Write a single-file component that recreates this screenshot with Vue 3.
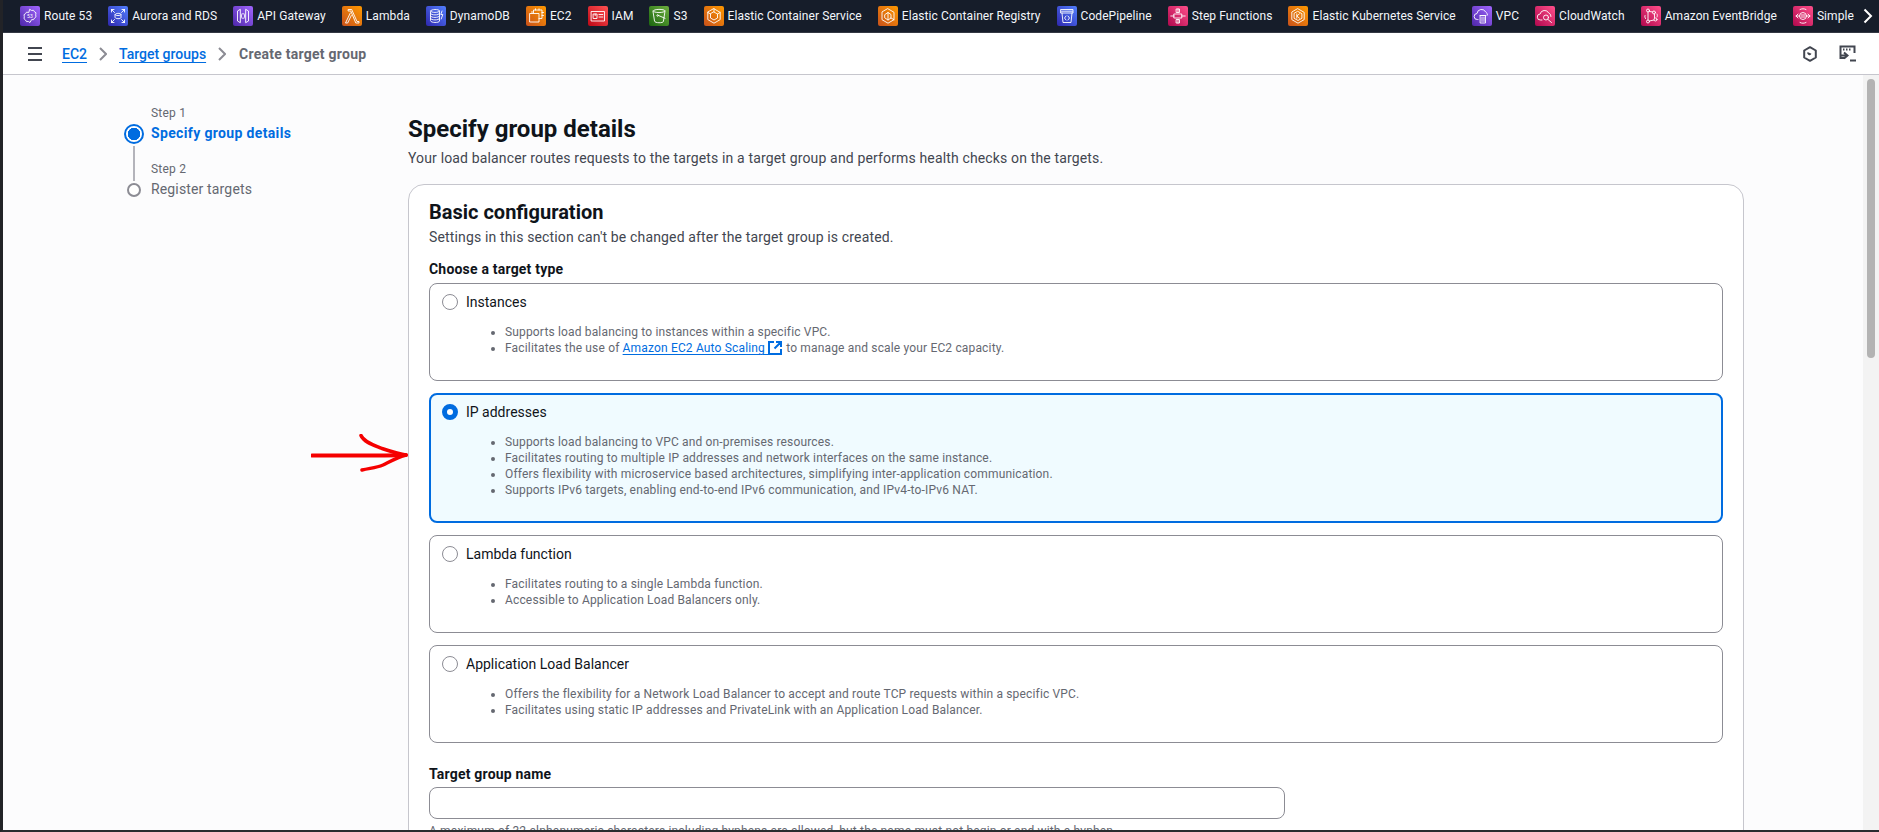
<script setup>
const navItems = [
  { name: 'Route 53', c: 'purple', d: 'M10 3.500l1.600 1 1.900-.2 1 1.500 1.500 1-.3 2 .3 2-1.500 1.300-1 1.600-1.900-.1L10 16.500l-1.600-1-1.900.1-1-1.600-1.500-1.300.3-2-.3-2 1.500-1 1-1.500 1.900.2z', label: '53' },
  { name: 'Aurora and RDS', c: 'blue', d: 'M3.500 3.500l3 3M3.500 3.500H6M3.500 3.500V6M16.500 3.500l-3 3M16.500 3.500H14M16.500 3.500V6M3.500 16.500l3-3M3.500 16.500H6M3.500 16.500V14M16.500 16.500l-3-3M16.500 16.500H14M16.500 16.500V14M7 8.500c0-1.600 6-1.600 6 0v3c0 1.600-6 1.600-6 0zM7 8.500c0 1.500 6 1.500 6 0' },
  { name: 'API Gateway', c: 'purple', d: 'M7 3.500L4.500 5v10L7 16.500zM13 3.500L15.500 5v10L13 16.500zM9.200 7.500l-1 2.500 1 2.500M10.800 7.500l1 2.500-1 2.500' },
  { name: 'Lambda', c: 'orange', d: 'M6.500 3.500h3.200L15 15.500h2v1.500h-3.200L8.800 5H6.500zM9.300 9.500L5.700 17H3.500l4.800-10' },
  { name: 'DynamoDB', c: 'blue', d: 'M4.500 5c0-2 9-2 9 0v10c0 2-9 2-9 0zM4.500 5c0 2 9 2 9 0M4.500 10c0 2 9 2 9 0M4.500 7.500c0 2 9 2 9 0M4.500 12.500c0 2 9 2 9 0M16 5l-1.200 3.500h2L15.200 13' },
  { name: 'EC2', c: 'orange', d: 'M7.500 7V4h8.500v8.500h-3M4 7.500h9v8.500H4zM6 5.500v1.500M9.500 2.800v1.200M13 2.800v1.200M16 6.500h1.500M16 9.500h1.500' },
  { name: 'IAM', c: 'red', d: 'M3.500 5.500h13v9.500h-13zM5.500 8h3.500v4.500H5.500zM7.200 8v1.500M11 8.500h3.800M11 11h3.800' },
  { name: 'S3', c: 'green', d: 'M4 5c0-2.200 12-2.200 12 0l-1.600 10.500c-.3 1.700-8.500 1.700-8.800 0zM4 5c0 2.200 12 2.200 12 0M9.500 9.500l6.500 2.800M9.500 9.500a.8.8 0 1 0-1.600 0 .8.8 0 0 0 1.600 0z' },
  { name: 'Elastic Container Service', c: 'orange', d: 'M10 2.800l6.200 3.600v7.200L10 17.200l-6.200-3.600V6.400zM10 6l3.500 2v4L10 14l-3.500-2V8zM10 2.800V6M3.800 6.400l2.700 1.600M16.200 6.400L13.500 8' },
  { name: 'Elastic Container Registry', c: 'orange', d: 'M10 2.800l6 3.500v7.400l-6 3.500-6-3.500V6.300zM7 8.500L10 6.500l3 2v3.500l-3 2-3-2zM10 6.500v7.500M13 12l3 1.700' },
  { name: 'CodePipeline', c: 'blue', d: 'M4 3.500h12v3.500H4zM5 7l1 9.500h8l1-9.500M4.500 5.200h11M9 10l-1.500 2L9 14M11 10l1.500 2L11 14' },
  { name: 'Step Functions', c: 'pink', d: 'M2.800 10h3.400M13.800 10h3.400M10 3v3.500M10 13.500V17M6.200 8h7.600v4H6.200zM8.500 3h3v3.500h-3zM8.500 13.500h3V17h-3z' },
  { name: 'Elastic Kubernetes Service', c: 'orange', d: 'M10 2.800l6.200 3.600v7.200L10 17.200l-6.200-3.600V6.400zM10 5.500l3.900 2.200v4.600L10 14.500l-3.900-2.200V7.700zM8.800 7.800v4.400M11.500 7.800L8.800 10l2.700 2.200' },
  { name: 'VPC', c: 'purple', d: 'M6 13.500H5.300a3 3 0 0 1-.3-6A4.600 4.600 0 0 1 13.700 6a3.300 3.300 0 0 1 1.800 3M8.500 9.500h5v7.500h-5zM10 11v4.500M12 11v4.500M8 9.500h6' },
  { name: 'CloudWatch', c: 'pink', d: 'M7 14H5.500a3 3 0 0 1-.4-6A4.600 4.600 0 0 1 13.700 7a3.500 3.500 0 0 1 2.300 3.500M13.500 11.500a2.500 2.500 0 1 0-5 0 2.500 2.500 0 0 0 5 0zM13 13.500l3.500 3' },
  { name: 'Amazon EventBridge', c: 'pink', d: 'M8.500 4.500a1.500 1.500 0 1 0-3 0 1.500 1.500 0 0 0 3 0zM14.500 6.500a1.500 1.500 0 1 0-3 0 1.500 1.500 0 0 0 3 0zM8.500 15.500a1.500 1.500 0 1 0-3 0 1.500 1.500 0 0 0 3 0zM16 13.500a1.500 1.500 0 1 0-3 0 1.500 1.500 0 0 0 3 0zM8.500 5.500l3.200.5M7 6v8M8.500 15l4.500-1M13.500 8v4M4 9.500c-.5 1 0 2 .5 3M16 8c.5 1 .5 2 0 3' },
  { name: 'Simple Notification Service', c: 'pink', d: 'M13.500 10a3.500 3.500 0 1 0-7 0 3.500 3.500 0 0 0 7 0zM3 10h3.500M13.500 10H17M5 8l-2 2 2 2M15 8l2 2-2 2M7 3.500c2-1 4-1 6 0M7 16.500c2 1 4 1 6 0M8 9h4M8 11h4' }
]

const cards = [
  {
    title: 'Instances',
    lines: [
      [{ t: 'Supports load balancing to instances within a specific VPC.' }],
      [
        { t: 'Facilitates the use of ' },
        { t: 'Amazon EC2 Auto Scaling', link: true },
        { t: ' to manage and scale your EC2 capacity.' }
      ]
    ]
  },
  {
    title: 'IP addresses',
    selected: true,
    lines: [
      [{ t: 'Supports load balancing to VPC and on-premises resources.' }],
      [{ t: 'Facilitates routing to multiple IP addresses and network interfaces on the same instance.' }],
      [{ t: 'Offers flexibility with microservice based architectures, simplifying inter-application communication.' }],
      [{ t: 'Supports IPv6 targets, enabling end-to-end IPv6 communication, and IPv4-to-IPv6 NAT.' }]
    ]
  },
  {
    title: 'Lambda function',
    lines: [
      [{ t: 'Facilitates routing to a single Lambda function.' }],
      [{ t: 'Accessible to Application Load Balancers only.' }]
    ]
  },
  {
    title: 'Application Load Balancer',
    lines: [
      [{ t: 'Offers the flexibility for a Network Load Balancer to accept and route TCP requests within a specific VPC.' }],
      [{ t: 'Facilitates using static IP addresses and PrivateLink with an Application Load Balancer.' }]
    ]
  }
]
</script>

<template>
  <div class="app">
    <header class="topnav">
      <svg class="defs" width="0" height="0" aria-hidden="true">
        <defs>
          <linearGradient id="g-purple" x1="0" y1="1" x2="1" y2="0"><stop offset="0" stop-color="#4d27a8" /><stop offset="1" stop-color="#a166ff" /></linearGradient>
          <linearGradient id="g-blue" x1="0" y1="1" x2="1" y2="0"><stop offset="0" stop-color="#2e27ad" /><stop offset="1" stop-color="#527fff" /></linearGradient>
          <linearGradient id="g-orange" x1="0" y1="1" x2="1" y2="0"><stop offset="0" stop-color="#c8511b" /><stop offset="1" stop-color="#ff9900" /></linearGradient>
          <linearGradient id="g-red" x1="0" y1="1" x2="1" y2="0"><stop offset="0" stop-color="#bd0816" /><stop offset="1" stop-color="#ff5252" /></linearGradient>
          <linearGradient id="g-green" x1="0" y1="1" x2="1" y2="0"><stop offset="0" stop-color="#1b660f" /><stop offset="1" stop-color="#6cae3e" /></linearGradient>
          <linearGradient id="g-pink" x1="0" y1="1" x2="1" y2="0"><stop offset="0" stop-color="#b0084d" /><stop offset="1" stop-color="#ff4f8b" /></linearGradient>
        </defs>
      </svg>
      <nav class="nav-list">
        <a v-for="item in navItems" :key="item.name" class="nav-item">
          <svg class="nav-icon" viewBox="0 0 20 20" width="20" height="20">
            <rect width="20" height="20" rx="2" :fill="`url(#g-${item.c})`" />
            <path :d="item.d" fill="none" stroke="#fff" stroke-width="0.9" stroke-linejoin="round" stroke-linecap="round" />
            <text v-if="item.label" x="10" y="12" text-anchor="middle" font-size="5" fill="#fff">{{ item.label }}</text>
          </svg>
          <span>{{ item.name }}</span>
        </a>
      </nav>
      <button class="nav-more" aria-label="Scroll right">
        <svg viewBox="0 0 10 16" width="10" height="16"><path d="M1.500 1.500L8 8l-6.500 6.500" fill="none" stroke="#fff" stroke-width="2" /></svg>
      </button>
    </header>

    <div class="crumbbar">
      <svg class="burger" viewBox="0 0 14 14" width="14" height="14"><path d="M0 1h14M0 7h14M0 13h14" stroke="#424650" stroke-width="2" fill="none" /></svg>
      <ol class="crumbs">
        <li><a class="crumb-link">EC2</a></li>
        <li class="sep"><svg viewBox="0 0 8 14" width="8" height="14"><path d="M1 1l6 6-6 6" fill="none" stroke="#8c8c94" stroke-width="2" /></svg></li>
        <li><a class="crumb-link">Target groups</a></li>
        <li class="sep"><svg viewBox="0 0 8 14" width="8" height="14"><path d="M1 1l6 6-6 6" fill="none" stroke="#8c8c94" stroke-width="2" /></svg></li>
        <li class="crumb-current">Create target group</li>
      </ol>
      <div class="crumb-tools">
        <svg viewBox="0 0 16 16" width="16" height="16"><path d="M8 1.200l5.800 3.300v7L8 14.800l-5.800-3.300v-7z" fill="none" stroke="#424650" stroke-width="2" stroke-linejoin="round" /><path d="M5.500 6l4 1.800a1.900 1.900 0 1 1-4-1.800z" fill="#424650" /></svg>
        <svg viewBox="0 0 17 17" width="17" height="17"><path d="M6 13H1.500V1.500h14V8" fill="none" stroke="#424650" stroke-width="2" /><path d="M4 4.500h1.500M7 4.500h1.500M10 4.500h1.500" stroke="#424650" stroke-width="2" /><path d="M5 7.500l3.500 3L5 13.500M2 10.500h6M11 15.500h6" fill="none" stroke="#424650" stroke-width="2" /></svg>
      </div>
    </div>

    <div class="body">
      <div class="page">
        <aside class="steps">
          <span class="step-label step-label-1">Step 1</span>
          <span class="marker marker-active"></span>
          <span class="step-title step-title-active">Specify group details</span>
          <span class="connector"></span>
          <span class="step-label step-label-2">Step 2</span>
          <span class="marker"></span>
          <span class="step-title">Register targets</span>
        </aside>

        <main class="content">
          <h1>Specify group details</h1>
          <p class="lead">Your load balancer routes requests to the targets in a target group and performs health checks on the targets.</p>

          <section class="panel">
            <h2>Basic configuration</h2>
            <p class="lead lead-panel">Settings in this section can't be changed after the target group is created.</p>
            <div class="field-label field-label-type">Choose a target type</div>

            <div class="cards">
              <div v-for="card in cards" :key="card.title" class="card" :class="{ selected: card.selected }">
                <div class="card-head">
                  <span class="radio"></span>
                  <span>{{ card.title }}</span>
                </div>
                <ul>
                  <li v-for="(line, i) in card.lines" :key="i">
                    <template v-for="(part, j) in line" :key="j">
                      <a v-if="part.link" class="ext-link">{{ part.t }}&nbsp;</a>
                      <svg v-if="part.link" class="ext-icon" viewBox="0 0 14 14" width="14" height="14"><path d="M6 1H1v12h12V8M8 1h5v5M13 1L6.500 7.500" fill="none" stroke="#006ce0" stroke-width="2" /></svg>
                      <span v-if="!part.link">{{ part.t }}</span>
                    </template>
                  </li>
                </ul>
              </div>
            </div>

            <div class="field-label field-label-name">Target group name</div>
            <input class="text-input" type="text" />
            <p class="hint">A maximum of 32 alphanumeric characters including hyphens are allowed, but the name must not begin or end with a hyphen.</p>
          </section>
        </main>

        <svg class="arrow" viewBox="0 0 100 44" width="100" height="44">
          <path d="M1 21.500c30 0 65 .5 94-.5" fill="none" stroke="#f50000" stroke-width="4" stroke-linecap="round" />
          <path d="M50 1.500c3 7 14 10 21 13 9 3 18 6 24 6.500-8 2-15 6-23 10-7 3-13 3-21 5" fill="none" stroke="#f50000" stroke-width="3.500" stroke-linecap="round" stroke-linejoin="round" />
        </svg>
      </div>
      <div class="scrollbar"><div class="thumb"></div></div>
    </div>
  </div>
</template>

<style scoped>
.app {
  box-sizing: border-box;
  width: 100%;
  height: 832px;
  display: flex;
  flex-direction: column;
  overflow: hidden;
  border-left: 3px solid #222327;
  border-bottom: 2px solid #2a2b30;
  background: #fcfcfd;
  font-family: Roboto, "Liberation Sans", Arial, sans-serif;
  color: #0f141a;
}
.defs { position: absolute; }
.topnav {
  flex: none;
  height: 33px;
  box-sizing: border-box;
  display: flex;
  align-items: center;
  background: #161d2a;
  border-bottom: 1px solid #333843;
}
.nav-list {
  flex: 1;
  min-width: 0;
  height: 100%;
  display: flex;
  align-items: center;
  gap: 16px;
  padding-left: 17px;
  overflow: hidden;
}
.nav-item {
  flex: none;
  display: flex;
  align-items: center;
  gap: 4px;
  font-size: 12px;
  letter-spacing: 0.08px;
  color: #f3f6fa;
  white-space: nowrap;
}
.nav-icon { flex: none; }
.nav-more {
  flex: none;
  width: 25px;
  padding: 0 0 0 2px;
  border: 0;
  background: none;
  display: flex;
  justify-content: center;
}
.crumbbar {
  flex: none;
  height: 42px;
  box-sizing: border-box;
  display: flex;
  align-items: center;
  padding-left: 25px;
  padding-right: 23px;
  background: #fff;
  border-bottom: 1px solid #c6c6cd;
}
.burger { flex: none; margin-right: 20px; }
.crumbs {
  flex: 1;
  margin: 0;
  padding: 0;
  list-style: none;
  display: flex;
  align-items: center;
  font-size: 14px;
  font-weight: 500;
}
.sep { display: flex; padding: 0 12px; }
.crumb-link {
  color: #006ce0;
  text-decoration: underline;
  text-underline-offset: 3px;
}
.crumb-current { color: #656871; font-weight: 700; letter-spacing: 0.25px; margin-left: 1px; }
.crumb-tools { display: flex; align-items: center; gap: 21px; }
.body {
  flex: 1;
  min-height: 0;
  display: flex;
}
.page {
  position: relative;
  flex: 1;
  min-width: 0;
  display: flex;
  align-items: flex-start;
  overflow: hidden;
}
.steps {
  flex: none;
  box-sizing: border-box;
  width: 405px;
  padding: 30px 0 0 121px;
  display: grid;
  grid-template-columns: 20px 1fr;
  column-gap: 7px;
  row-gap: 2px;
}
.step-label {
  grid-column: 2;
  font-size: 12px;
  line-height: 16px;
  letter-spacing: 0.2px;
  color: #656871;
}
.step-label-2 { padding-top: 16px; }
.step-title {
  grid-column: 2;
  font-size: 14px;
  line-height: 20px;
  letter-spacing: 0.15px;
  color: #656871;
}
.step-title-active { color: #006ce0; font-weight: 700; letter-spacing: 0.35px; }
.marker {
  grid-column: 1;
  justify-self: center;
  align-self: center;
  box-sizing: border-box;
  width: 14px;
  height: 14px;
  margin: 1px 0 -1px;
  border-radius: 50%;
  border: 2px solid #8c8c94;
  background: #fff;
}
.marker-active {
  width: 20px;
  height: 20px;
  border-color: #006ce0;
  background: radial-gradient(circle, #006ce0 0 6px, #fff 6.5px);
}
.connector {
  grid-column: 1;
  grid-row: 3;
  justify-self: center;
  width: 2px;
  margin: 1px 0 -4px;
  background: #b4b4bb;
}
.content {
  flex: none;
  width: 1336px;
  padding-top: 39px;
}
h1 {
  margin: 0;
  font-size: 24px;
  line-height: 30px;
  font-weight: 700;
  color: #0f141a;
}
.lead {
  margin: 4px 0 0;
  font-size: 14px;
  line-height: 20px;
  letter-spacing: 0.15px;
  color: #424650;
}
.lead-panel { margin-top: 3px; }
.panel {
  box-sizing: border-box;
  margin-top: 16px;
  padding: 15px 20px 20px;
  border: 1px solid #c6c6cd;
  border-radius: 16px;
  background: #fff;
}
h2 {
  margin: 0;
  font-size: 20px;
  line-height: 24px;
  font-weight: 700;
  color: #0f141a;
}
.field-label {
  font-size: 14px;
  line-height: 20px;
  font-weight: 700;
  letter-spacing: 0.2px;
  color: #0f141a;
}
.field-label-type { margin-top: 12px; }
.field-label-name { margin-top: 21px; }
.cards {
  margin-top: 4px;
  display: flex;
  flex-direction: column;
  gap: 12px;
}
.card {
  box-sizing: border-box;
  padding: 8px 12px 24px;
  border: 1px solid #8c8c94;
  border-radius: 8px;
  background: #fff;
}
.card.selected {
  padding: 7px 11px 23px;
  border: 2px solid #006ce0;
  background: #f0fbff;
}
.card-head {
  display: flex;
  align-items: center;
  gap: 8px;
  font-size: 14px;
  line-height: 20px;
  color: #0f141a;
}
.radio {
  flex: none;
  box-sizing: border-box;
  width: 16px;
  height: 16px;
  border-radius: 50%;
  border: 1px solid #8c8c94;
  background: #fff;
}
.selected .radio { border: 5px solid #006ce0; }
ul {
  margin: 12px 0 0;
  padding: 0 0 0 63px;
  font-size: 12px;
  line-height: 16px;
  letter-spacing: 0.16px;
  color: #656871;
}
.ext-link {
  color: #006ce0;
  text-decoration: underline;
  text-underline-offset: 2px;
}
.ext-icon { vertical-align: -3px; margin-right: 1px; }
.text-input {
  display: block;
  box-sizing: border-box;
  width: 856px;
  height: 32px;
  margin-top: 3px;
  border: 1px solid #8c8c94;
  border-radius: 8px;
  background: #fff;
  outline: none;
}
.hint {
  margin: 4px 0 0;
  font-size: 12px;
  line-height: 16px;
  letter-spacing: 0.16px;
  color: #656871;
}
.arrow {
  position: absolute;
  left: 308px;
  top: 359px;
}
.scrollbar {
  flex: none;
  width: 16px;
  background: #f3f3f3;
  padding: 4px;
  box-sizing: border-box;
}
.thumb {
  width: 8px;
  height: 279px;
  border-radius: 4px;
  background: #b3b3b3;
}
</style>

<style>
html, body { margin: 0; overflow: hidden; }
</style>
